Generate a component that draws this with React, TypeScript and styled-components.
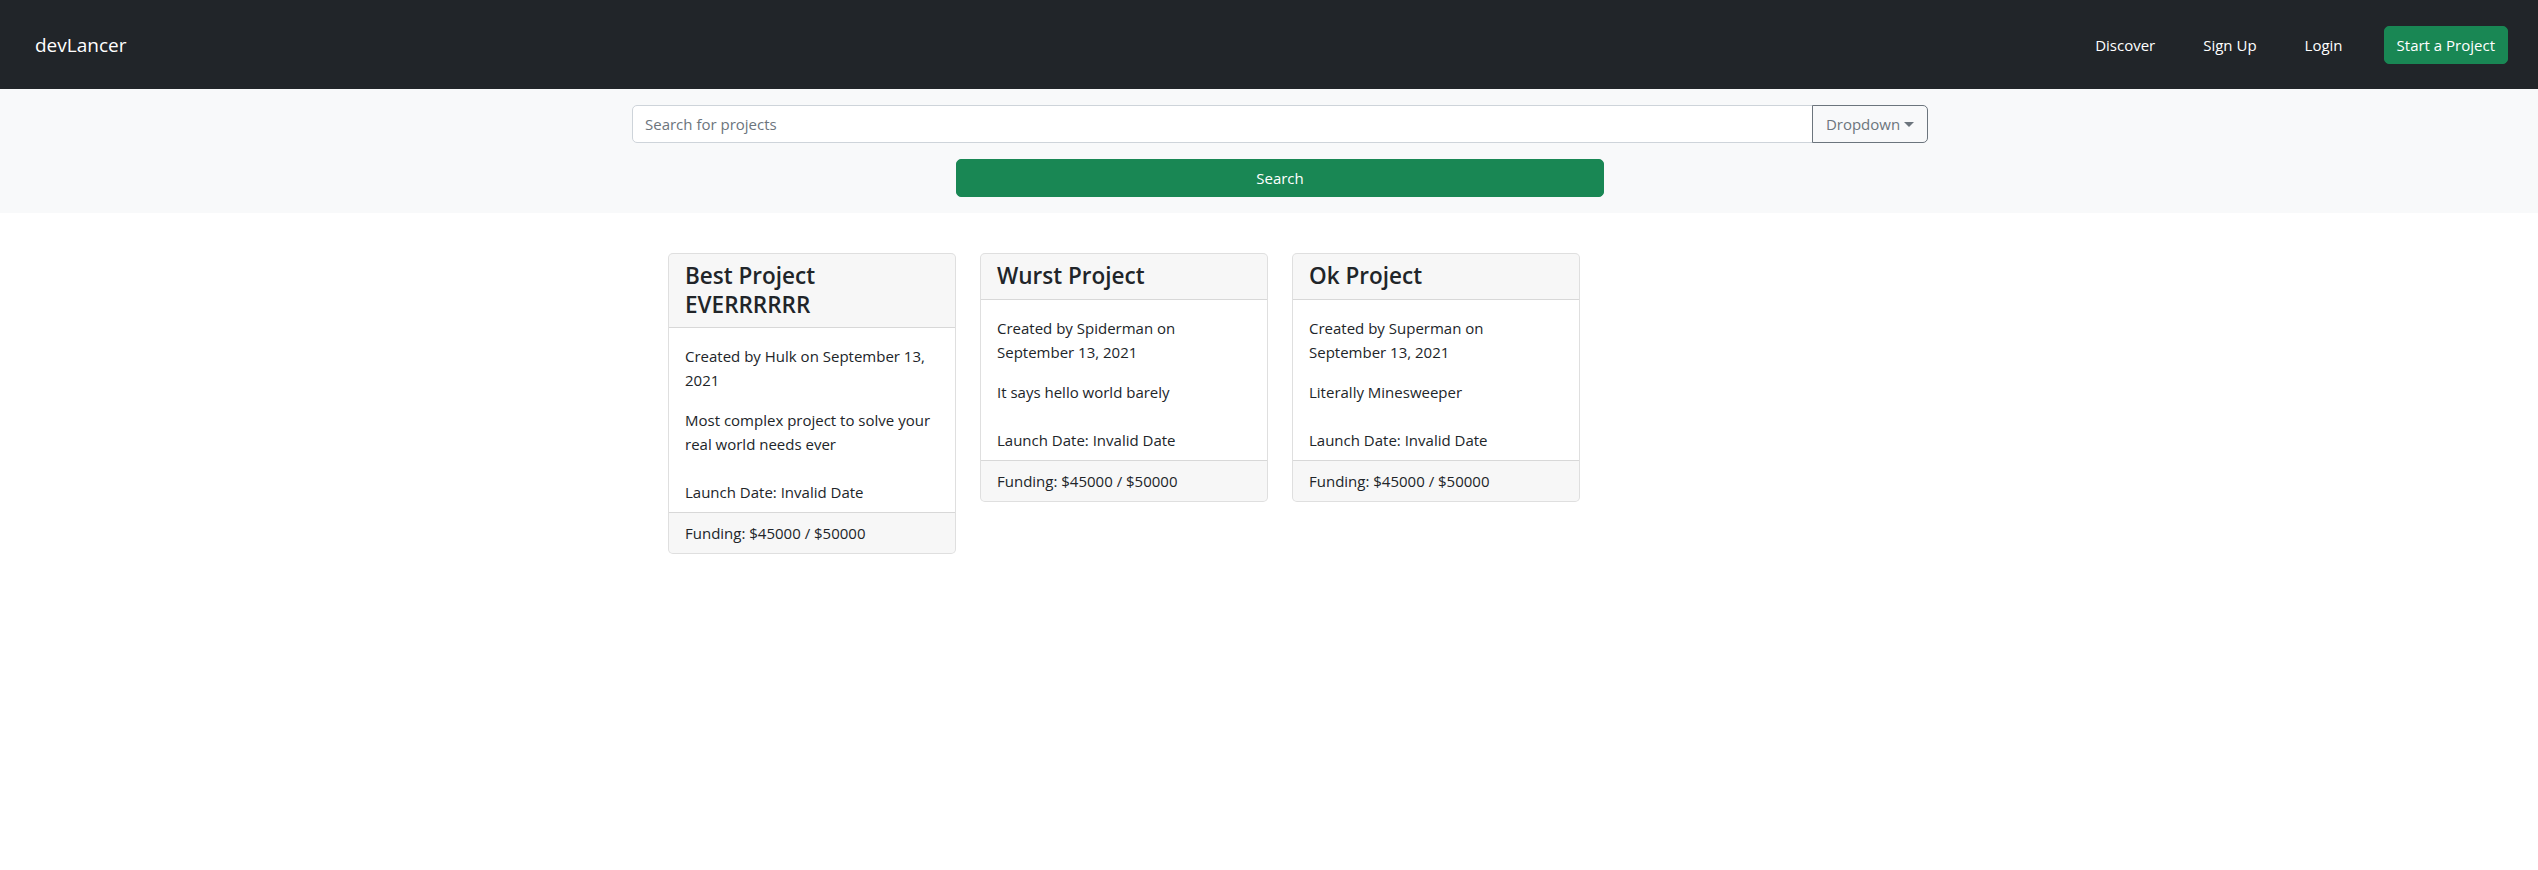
import React from "react";
import styled, { createGlobalStyle } from "styled-components";

const GlobalStyle = createGlobalStyle`
  * { box-sizing: border-box; }
  html, body { margin: 0; padding: 0; background: #fff; }
  body {
    font-family: "Open Sans", "Noto Sans", sans-serif;
    font-size: 15px;
    line-height: 24px;
    color: #212529;
  }
`;

const NavBar = styled.nav`
  height: 89px;
  background: #212529;
  display: flex;
  align-items: center;
  justify-content: space-between;
  padding: 0 30px 0 35px;
`;

const Brand = styled.a`
  color: #fff;
  font-size: 19px;
  line-height: 30px;
  text-decoration: none;
`;

const NavList = styled.ul`
  list-style: none;
  margin: 0;
  padding: 0;
  display: flex;
  align-items: center;
`;

const NavLink = styled.a`
  display: block;
  color: #fff;
  text-decoration: none;
  padding: 8px 24px;
  white-space: nowrap;
`;

const GreenButton = styled.button<{ $block?: boolean }>`
  font-family: inherit;
  font-size: 15px;
  line-height: 24px;
  white-space: nowrap;
  color: #fff;
  background: #198754;
  border: 1px solid #198754;
  border-radius: 5px;
  padding: 6px 12px;
  height: 38px;
  cursor: pointer;
  width: ${(p) => (p.$block ? "100%" : "auto")};
  margin-left: ${(p) => (p.$block ? "0" : "17px")};
`;

const SearchSection = styled.section`
  background: #f8f9fa;
  padding: 16px 0 16px 22px;
`;

const Container = styled.div`
  width: 1320px;
  margin: 0 auto;
  padding: 0 12px;
  display: flex;
  flex-direction: column;
  align-items: center;
  gap: 16px;
`;

const InputGroup = styled.div`
  display: flex;
  width: 100%;
  height: 38px;
`;

const SearchInput = styled.input`
  flex: 1;
  font-family: inherit;
  font-size: 15px;
  padding: 6px 12px;
  border: 1px solid #ced4da;
  border-radius: 5px 0 0 5px;
  background: #fff;
  color: #212529;
  outline: none;
  &::placeholder { color: #6c757d; }
`;

const DropdownButton = styled.button`
  font-family: inherit;
  font-size: 15px;
  line-height: 24px;
  color: #6c757d;
  background: transparent;
  border: 1px solid #6c757d;
  border-radius: 0 5px 5px 0;
  margin-left: -1px;
  padding: 6px 12px;
  width: 116px;
  display: flex;
  align-items: center;
  justify-content: center;
  &::after {
    content: "";
    display: inline-block;
    margin-left: 4px;
    border-top: 5px solid #6c757d;
    border-left: 5px solid transparent;
    border-right: 5px solid transparent;
  }
`;

const SearchCol = styled.div`
  width: 648px;
`;

const CardsArea = styled.main`
  padding: 40px 0 0 22px;
`;

const CardsRow = styled.div`
  width: 1320px;
  margin: 0 auto;
  padding: 0 0 0 48px;
  display: flex;
  align-items: flex-start;
  gap: 24px;
`;

const Card = styled.div`
  width: 288px;
  border: 1px solid rgba(0, 0, 0, 0.125);
  border-radius: 5px;
  overflow: hidden;
  background: #fff;
`;

const CardHeader = styled.div`
  background: rgba(0, 0, 0, 0.03);
  border-bottom: 1px solid rgba(0, 0, 0, 0.125);
  padding: 8px 16px;
`;

const CardTitle = styled.h4`
  margin: 0;
  font-size: 22.5px;
  font-weight: 600;
  line-height: 28.5px;
`;

const CardBody = styled.div`
  padding: 16px 16px;
`;

const CardText = styled.p`
  margin: 0 0 16px;
  &:last-child { margin-bottom: 0; }
`;

const CardMeta = styled.div`
  padding: 8px 16px;
`;

const CardFooter = styled.div`
  background: rgba(0, 0, 0, 0.03);
  border-top: 1px solid rgba(0, 0, 0, 0.125);
  padding: 8px 16px;
`;

const projects = [
  {
    title: "Best Project EVERRRRRR",
    author: "Hulk",
    description: "Most complex project to solve your real world needs ever",
  },
  { title: "Wurst Project", author: "Spiderman", description: "It says hello world barely" },
  { title: "Ok Project", author: "Superman", description: "Literally Minesweeper" },
];

export default function App() {
  return (
    <>
      <GlobalStyle />
      <NavBar>
        <Brand href="#">devLancer</Brand>
        <NavList>
          <li><NavLink href="#">Discover</NavLink></li>
          <li><NavLink href="#">Sign Up</NavLink></li>
          <li><NavLink href="#">Login</NavLink></li>
          <li><GreenButton>Start a Project</GreenButton></li>
        </NavList>
      </NavBar>
      <SearchSection>
        <Container>
          <InputGroup>
            <SearchInput placeholder="Search for projects" />
            <DropdownButton>Dropdown</DropdownButton>
          </InputGroup>
          <SearchCol>
            <GreenButton $block>Search</GreenButton>
          </SearchCol>
        </Container>
      </SearchSection>
      <CardsArea>
        <CardsRow>
          {projects.map((p) => (
            <Card key={p.title}>
              <CardHeader>
                <CardTitle>{p.title}</CardTitle>
              </CardHeader>
              <CardBody>
                <CardText>Created by {p.author} on September 13, 2021</CardText>
                <CardText>{p.description}</CardText>
              </CardBody>
              <CardMeta>Launch Date: Invalid Date</CardMeta>
              <CardFooter>Funding: $45000 / $50000</CardFooter>
            </Card>
          ))}
        </CardsRow>
      </CardsArea>
    </>
  );
}
